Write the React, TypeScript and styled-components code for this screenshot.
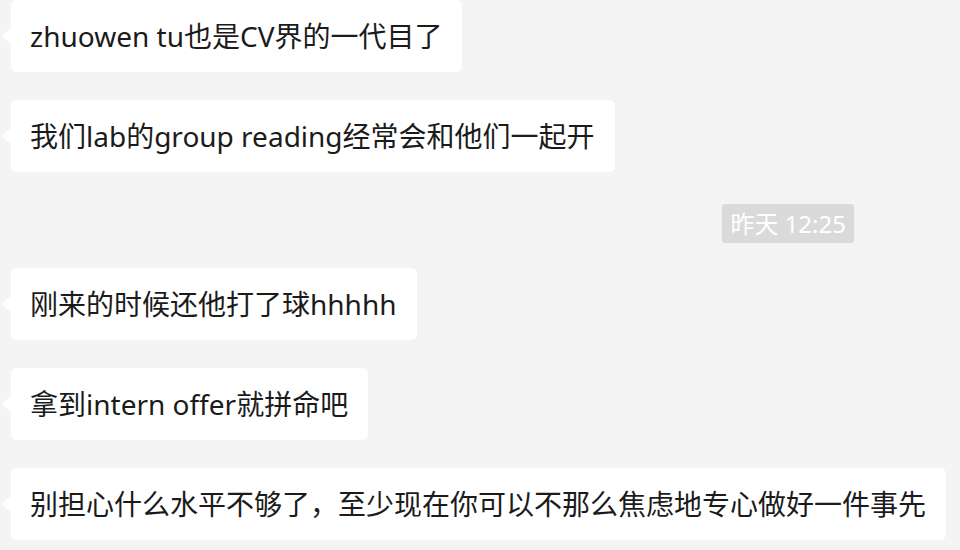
import React from "react";
import styled, { createGlobalStyle } from "styled-components";

const Global = createGlobalStyle`
  html, body {
    margin: 0;
    padding: 0;
    background: #f4f4f4;
  }
  body {
    font-family: "Noto Sans", "Noto Sans CJK SC", sans-serif;
  }
`;

const Chat = styled.div`
  width: 960px;
  height: 550px;
  overflow: hidden;
  background: #f4f4f4;
  display: flex;
  flex-direction: column;
  align-items: flex-start;
  gap: 28px;
  padding: 0 0 0 11px;
  box-sizing: border-box;
`;

const Bubble = styled.div`
  position: relative;
  background: #ffffff;
  border-radius: 6px;
  padding: 16px 20px 16px 19px;
  font-size: 28px;
  line-height: 40px;
  color: #1b1b1b;
  white-space: nowrap;

  &::before {
    content: "";
    position: absolute;
    left: -10px;
    top: 28px;
    width: 0;
    height: 0;
    border-top: 8px solid transparent;
    border-bottom: 8px solid transparent;
    border-right: 10px solid #ffffff;
  }
`;

const TimeRow = styled.div`
  align-self: stretch;
  display: flex;
  justify-content: flex-end;
  padding-right: 106px;
  margin: 4px 0 -3px;
`;

const TimeTag = styled.div`
  background: #dadada;
  color: #ffffff;
  font-size: 24px;
  line-height: 39px;
  padding: 0 8px;
  border-radius: 3px;
`;

const before = [
  "zhuowen tu也是CV界的一代目了",
  "我们lab的group reading经常会和他们一起开",
];

const after = [
  "刚来的时候还他打了球hhhhh",
  "拿到intern offer就拼命吧",
  "别担心什么水平不够了，至少现在你可以不那么焦虑地专心做好一件事先",
];

export default function App() {
  return (
    <>
      <Global />
      <Chat>
        {before.map((t) => (
          <Bubble key={t}>{t}</Bubble>
        ))}
        <TimeRow>
          <TimeTag>昨天 12:25</TimeTag>
        </TimeRow>
        {after.map((t) => (
          <Bubble key={t}>{t}</Bubble>
        ))}
      </Chat>
    </>
  );
}
